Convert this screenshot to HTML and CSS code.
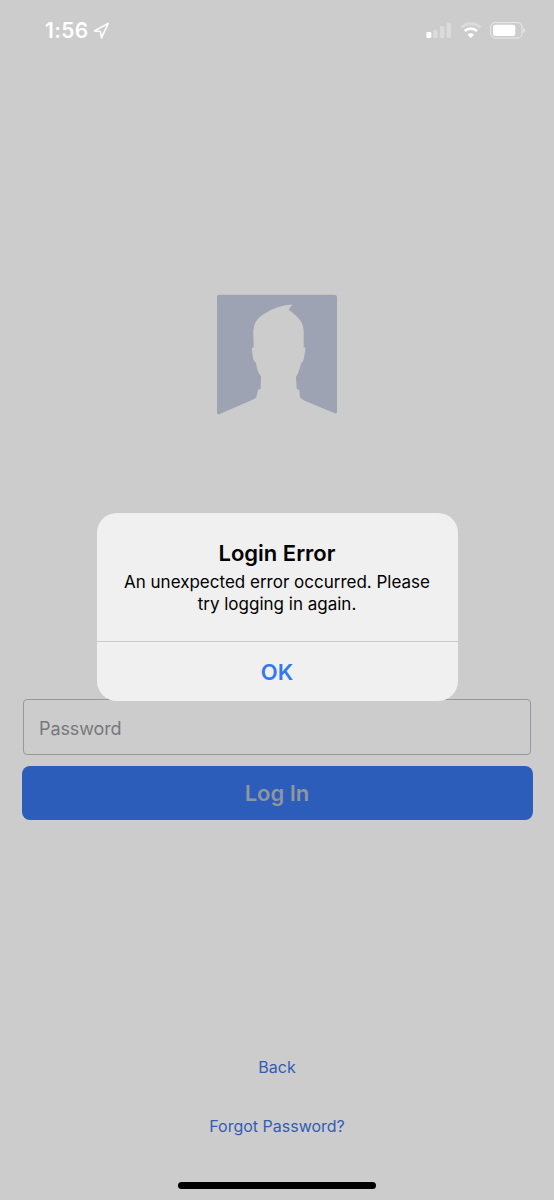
FILE: index.html
```html
<!DOCTYPE html>
<html lang="en">
<head>
<meta charset="utf-8">
<meta name="viewport" content="width=device-width, initial-scale=1">
<title>Log In</title>
<link rel="stylesheet" href="styles.css">
</head>
<body>
<main class="screen">
  <header class="status-bar">
    <div class="status-time">
      <span class="clock">1:56</span>
      <svg class="location-icon" viewBox="0 0 48 48" aria-hidden="true"><path d="M4 25 43 4 24 45 21 27Z"/></svg>
    </div>
    <svg class="status-icons" viewBox="30 27 309 66" aria-hidden="true">
      <g fill="#fff">
        <rect x="37" y="66" width="15" height="18" rx="4"/>
        <rect class="faint" x="58" y="59" width="13" height="25" rx="3"/>
        <rect class="faint" x="78" y="48" width="13" height="36" rx="3"/>
        <rect class="faint" x="98" y="38" width="13" height="46" rx="3"/>
        <path d="M161 74a13 13 0 0 1 19 0l-9.500 10Z"/>
      </g>
      <g fill="none" stroke="#fff">
        <path class="faint" d="M142 53a41 41 0 0 1 57 0" stroke-width="9"/>
        <path d="M152 63a27 27 0 0 1 37 0" stroke-width="8"/>
        <rect x="230" y="38" width="94" height="46" rx="13" stroke-width="3" opacity=".6"/>
      </g>
      <rect x="237" y="44" width="67" height="34" rx="7" fill="#fff"/>
      <path d="M328 53q5 2 5 8t-5 8Z" fill="#fff" opacity=".6"/>
    </svg>
  </header>

  <svg class="avatar" viewBox="30 30 360 360" role="img" aria-label="Profile photo">
    <path d="M38 29H382Q390 29 390 37V380Q390 388 382 384L302 351Q284 344 279 337L277 315 269 311 267 276Q277 260 282 235 289 231 291 218L296 188 290 187V137C289 105 265 90 245 74Q248 67 257 59C220 58 168 82 150 105Q137 122 139 145L140 187 134 190 138 220Q140 230 147 233 150 260 162 274L161 311 153 315 148 337Q144 342 128 348L40 386Q30 391 30 381V37Q30 29 38 29Z"/>
  </svg>

  <form class="login-form">
    <input class="password" type="password" placeholder="Password" aria-label="Password">
    <button class="login-button" type="button">Log In</button>
  </form>

  <nav class="links">
    <a class="link" href="#">Back</a>
    <a class="link" href="#">Forgot Password?</a>
  </nav>
  <div class="home-indicator"></div>

  <section class="alert" role="alertdialog" aria-label="Login Error">
    <div class="alert-body">
      <h1 class="alert-title">Login Error</h1>
      <p class="alert-text">An unexpected error occurred. Please<br>try logging in again.</p>
    </div>
    <button class="alert-ok" type="button">OK</button>
  </section>
</main>
</body>
</html>
```
FILE: styles.css
```css
* { box-sizing: border-box; }

body {
  margin: 0;
  background: #ccc;
  font-family: Inter, "Liberation Sans", sans-serif;
}

.screen {
  position: relative;
  display: flex;
  flex-direction: column;
  align-items: center;
  width: 554px;
  height: 1200px;
  overflow: hidden;
  background: #ccc;
}

.status-bar {
  display: flex;
  justify-content: space-between;
  width: 100%;
  height: 61px;
  padding: 19px 27px 0 45px;
}

.status-time { display: flex; gap: 5px; }

.clock {
  color: #fff;
  font-size: 21px;
  font-weight: 600;
  line-height: 24px;
  letter-spacing: .3px;
}

.location-icon {
  width: 17px;
  height: 17px;
  margin-top: 3px;
  fill: none;
  stroke: #fff;
  stroke-width: 4.500;
  stroke-linejoin: round;
}

.status-icons { width: 103px; height: 22px; }
.faint { opacity: .3; }

.avatar {
  width: 120px;
  height: 120px;
  margin-top: 234px;
  overflow: visible;
  fill: #9da3b2;
}

.login-form {
  display: flex;
  flex-direction: column;
  align-items: center;
  gap: 11px;
  width: 511px;
  margin-top: 284px;
}

.password {
  width: 508px;
  height: 56px;
  padding: 3px 15px 0;
  border: 1px solid #97989b;
  border-radius: 4px;
  background: transparent;
  font: 400 18px/24px Inter, sans-serif;
  letter-spacing: -.1px;
  outline: none;
}

.password::placeholder { color: #77787b; opacity: 1; }

.login-button {
  width: 100%;
  height: 54px;
  padding: 0;
  border: 0;
  border-radius: 8px;
  background: #2c5dbb;
  color: #90959e;
  font: 600 22px/28px Inter, sans-serif;
}

.links {
  display: flex;
  flex-direction: column;
  align-items: center;
  gap: 35px;
  margin-top: 235px;
}

.link {
  color: #315db5;
  font-size: 16px;
  line-height: 24px;
  text-decoration: none;
}

.home-indicator {
  width: 198px;
  height: 7px;
  margin-top: 44px;
  border-radius: 4px;
  background: #000;
}

.alert {
  position: absolute;
  top: 513px;
  left: 96.5px;
  width: 361px;
  height: 188px;
  border-radius: 20px;
  background: #f0f0f0;
  text-align: center;
  overflow: hidden;
}

.alert-body {
  height: 129px;
  padding-top: 26px;
  border-bottom: 1px solid #cbcbcc;
}

.alert-title {
  margin: 0;
  font-size: 22px;
  font-weight: 600;
  line-height: 29px;
}

.alert-text {
  margin: 3px 0 0;
  font-size: 17px;
  line-height: 22px;
}

.alert-ok {
  display: block;
  width: 100%;
  height: 59px;
  padding: 0;
  border: 0;
  background: transparent;
  color: #3478ed;
  font: 600 22px/28px Inter, sans-serif;
}
```
